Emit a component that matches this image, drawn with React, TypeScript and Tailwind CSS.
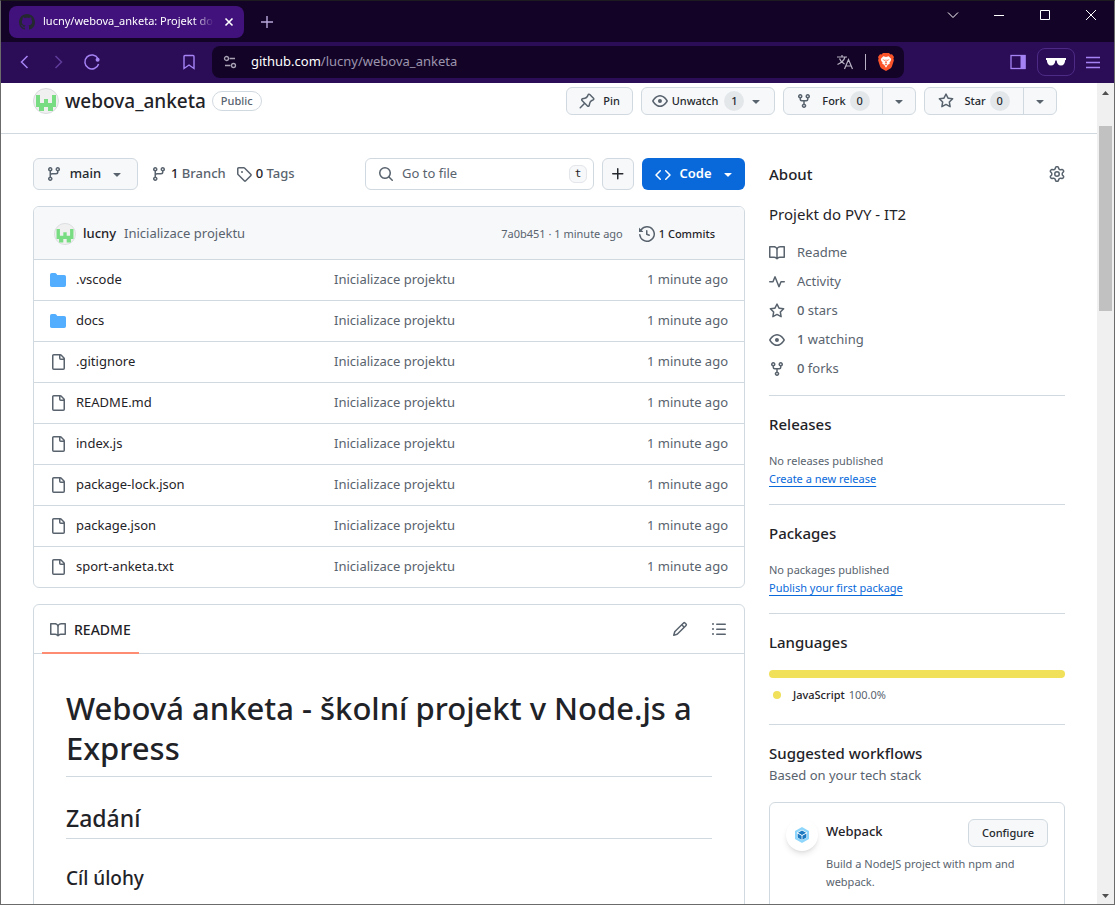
import type { ReactNode } from "react";

const ICONS = {
  pin: "m11.294.984 3.722 3.722a1.75 1.75 0 0 1-.504 2.826l-1.327.613a3.089 3.089 0 0 0-1.707 2.084l-.584 2.454c-.317 1.332-1.972 1.8-2.94.832L5.75 11.311 1.78 15.28a.749.749 0 1 1-1.06-1.06l3.969-3.97-2.204-2.204c-.968-.968-.5-2.623.832-2.94l2.454-.584a3.08 3.08 0 0 0 2.084-1.707l.613-1.327a1.75 1.75 0 0 1 2.826-.504ZM6.283 9.723l2.732 2.731a.25.25 0 0 0 .42-.119l.584-2.454a4.586 4.586 0 0 1 2.537-3.098l1.328-.613a.25.25 0 0 0 .072-.404l-3.722-3.722a.25.25 0 0 0-.404.072l-.613 1.328a4.584 4.584 0 0 1-3.098 2.537l-2.454.584a.25.25 0 0 0-.119.42l2.731 2.732Z",
  eye: "M8 2c1.981 0 3.671.992 4.933 2.078 1.27 1.091 2.187 2.345 2.637 3.023a1.62 1.62 0 0 1 0 1.798c-.45.678-1.367 1.932-2.637 3.023C11.67 13.008 9.981 14 8 14c-1.981 0-3.671-.992-4.933-2.078C1.797 10.83.88 9.576.43 8.898a1.62 1.62 0 0 1 0-1.798c.45-.677 1.367-1.931 2.637-3.022C4.33 2.992 6.019 2 8 2ZM1.679 7.932a.12.12 0 0 0 0 .136c.411.622 1.241 1.75 2.366 2.717C5.176 11.758 6.527 12.5 8 12.5c1.473 0 2.825-.742 3.955-1.715 1.124-.967 1.954-2.096 2.366-2.717a.12.12 0 0 0 0-.136c-.412-.621-1.242-1.75-2.366-2.717C10.824 4.242 9.473 3.5 8 3.5c-1.473 0-2.825.742-3.955 1.715-1.124.967-1.954 2.096-2.366 2.717ZM8 10a2 2 0 1 1-.001-3.999A2 2 0 0 1 8 10Z",
  fork: "M5 5.372v.878c0 .414.336.75.75.75h4.5a.75.75 0 0 0 .75-.75v-.878a2.25 2.25 0 1 1 1.5 0v.878a2.25 2.25 0 0 1-2.25 2.25h-1.5v2.128a2.251 2.251 0 1 1-1.5 0V8.5h-1.5A2.25 2.25 0 0 1 3.5 6.25v-.878a2.25 2.25 0 1 1 1.5 0ZM5 3.25a.75.75 0 1 0-1.5 0 .75.75 0 0 0 1.5 0Zm6.75.75a.75.75 0 1 0 0-1.5.75.75 0 0 0 0 1.5Zm-3 8.75a.75.75 0 1 0-1.5 0 .75.75 0 0 0 1.5 0Z",
  star: "M8 .25a.75.75 0 0 1 .673.418l1.882 3.815 4.21.612a.75.75 0 0 1 .416 1.279l-3.046 2.97.719 4.192a.751.751 0 0 1-1.088.791L8 12.347l-3.766 1.98a.75.75 0 0 1-1.088-.79l.72-4.194L.818 6.374a.75.75 0 0 1 .416-1.28l4.21-.611L7.327.668A.75.75 0 0 1 8 .25Zm0 2.445L6.615 5.5a.75.75 0 0 1-.564.41l-3.097.45 2.24 2.184a.75.75 0 0 1 .216.664l-.528 3.084 2.769-1.456a.75.75 0 0 1 .698 0l2.77 1.456-.53-3.084a.75.75 0 0 1 .216-.664l2.24-2.183-3.096-.45a.75.75 0 0 1-.564-.41L8 2.694Z",
  caret: "m4.427 7.427 3.396 3.396a.25.25 0 0 0 .354 0l3.396-3.396A.25.25 0 0 0 11.396 7H4.604a.25.25 0 0 0-.177.427Z",
  branch: "M9.5 3.25a2.25 2.25 0 1 1 3 2.122V6A2.5 2.5 0 0 1 10 8.5H6a1 1 0 0 0-1 1v1.128a2.251 2.251 0 1 1-1.5 0V5.372a2.25 2.25 0 1 1 1.5 0v1.836A2.493 2.493 0 0 1 6 7h4a1 1 0 0 0 1-1v-.628A2.25 2.25 0 0 1 9.5 3.25Zm-6 0a.75.75 0 1 0 1.5 0 .75.75 0 0 0-1.5 0Zm8.25-.75a.75.75 0 1 0 0 1.5.75.75 0 0 0 0-1.5ZM4.25 12a.75.75 0 1 0 0 1.5.75.75 0 0 0 0-1.5Z",
  tag: "M1 7.775V2.75C1 1.784 1.784 1 2.75 1h5.025c.464 0 .91.184 1.238.513l6.25 6.25a1.75 1.75 0 0 1 0 2.474l-5.026 5.026a1.75 1.75 0 0 1-2.474 0l-6.25-6.25A1.752 1.752 0 0 1 1 7.775Zm1.5 0c0 .066.026.13.073.177l6.25 6.25a.25.25 0 0 0 .354 0l5.025-5.025a.25.25 0 0 0 0-.354l-6.25-6.25a.25.25 0 0 0-.177-.073H2.75a.25.25 0 0 0-.25.25ZM6 5a1 1 0 1 1 0 2 1 1 0 0 1 0-2Z",
  search: "M10.68 11.74a6 6 0 0 1-7.922-8.982 6 6 0 0 1 8.982 7.922l3.04 3.04a.749.749 0 0 1-.326 1.275.749.749 0 0 1-.734-.215ZM11.5 7a4.499 4.499 0 1 0-8.997 0A4.499 4.499 0 0 0 11.5 7Z",
  plus: "M7.75 2a.75.75 0 0 1 .75.75V7h4.25a.75.75 0 0 1 0 1.5H8.5v4.25a.75.75 0 0 1-1.5 0V8.5H2.75a.75.75 0 0 1 0-1.5H7V2.75A.75.75 0 0 1 7.75 2Z",
  code: "m11.28 3.22 4.25 4.25a.75.75 0 0 1 0 1.06l-4.25 4.25a.749.749 0 0 1-1.275-.326.749.749 0 0 1 .215-.734L13.94 8l-3.72-3.72a.749.749 0 0 1 .326-1.275.749.749 0 0 1 .734.215Zm-6.56 0a.751.751 0 0 1 1.042.018.751.751 0 0 1 .018 1.042L2.06 8l3.72 3.72a.749.749 0 0 1-.326 1.275.749.749 0 0 1-.734-.215L.47 8.53a.75.75 0 0 1 0-1.06Z",
  history: "m.427 1.927 1.215 1.215a8.002 8.002 0 1 1-1.6 5.685.75.75 0 1 1 1.493-.154 6.5 6.5 0 1 0 1.18-4.458l1.358 1.358A.25.25 0 0 1 3.896 6H.25A.25.25 0 0 1 0 5.75V2.104a.25.25 0 0 1 .427-.177ZM7.75 4a.75.75 0 0 1 .75.75v2.992l2.028.812a.75.75 0 0 1-.557 1.392l-2.5-1A.751.751 0 0 1 7 8.25v-3.5A.75.75 0 0 1 7.75 4Z",
  file: "M2 1.75C2 .784 2.784 0 3.75 0h6.586c.464 0 .909.184 1.237.513l2.914 2.914c.329.328.513.773.513 1.237v9.586A1.75 1.75 0 0 1 13.25 16h-9.5A1.75 1.75 0 0 1 2 14.25Zm1.75-.25a.25.25 0 0 0-.25.25v12.5c0 .138.112.25.25.25h9.5a.25.25 0 0 0 .25-.25V6h-2.75A1.75 1.75 0 0 1 9 4.25V1.5Zm6.75.062V4.25c0 .138.112.25.25.25h2.688l-.011-.013-2.914-2.914-.013-.011Z",
  folder: "M1.75 1A1.75 1.75 0 0 0 0 2.75v10.5C0 14.216.784 15 1.75 15h12.5A1.75 1.75 0 0 0 16 13.25v-8.5A1.75 1.75 0 0 0 14.25 3H7.5a.25.25 0 0 1-.2-.1l-.9-1.2C6.07 1.26 5.55 1 5 1H1.75Z",
  book: "M0 1.75A.75.75 0 0 1 .75 1h4.253c1.227 0 2.317.59 3 1.501A3.743 3.743 0 0 1 11.006 1h4.245a.75.75 0 0 1 .75.75v10.5a.75.75 0 0 1-.75.75h-4.507a2.25 2.25 0 0 0-1.591.659l-.622.621a.75.75 0 0 1-1.06 0l-.622-.621A2.25 2.25 0 0 0 5.258 13H.75a.75.75 0 0 1-.75-.75Zm7.251 10.324.004-5.073-.002-2.253A2.25 2.25 0 0 0 5.003 2.5H1.5v9h3.757a3.75 3.75 0 0 1 1.994.574ZM8.755 4.75l-.004 7.322a3.752 3.752 0 0 1 1.992-.572H14.5v-9h-3.495a2.25 2.25 0 0 0-2.25 2.25Z",
  pencil: "M11.013 1.427a1.75 1.75 0 0 1 2.474 0l1.086 1.086a1.75 1.75 0 0 1 0 2.474l-8.61 8.61c-.21.21-.47.364-.756.445l-3.251.93a.75.75 0 0 1-.927-.928l.929-3.25c.081-.286.235-.547.445-.758l8.61-8.61Zm.176 4.823L9.75 4.81l-6.286 6.287a.253.253 0 0 0-.064.108l-.558 1.953 1.953-.558a.253.253 0 0 0 .108-.064Zm1.238-3.763a.25.25 0 0 0-.354 0L10.811 3.75l1.439 1.44 1.263-1.263a.25.25 0 0 0 0-.354Z",
  list: "M5.75 2.5h8.5a.75.75 0 0 1 0 1.5h-8.5a.75.75 0 0 1 0-1.5Zm0 5h8.5a.75.75 0 0 1 0 1.5h-8.5a.75.75 0 0 1 0-1.5Zm0 5h8.5a.75.75 0 0 1 0 1.5h-8.5a.75.75 0 0 1 0-1.5ZM2 14a1 1 0 1 1 0-2 1 1 0 0 1 0 2Zm1-6a1 1 0 1 1-2 0 1 1 0 0 1 2 0ZM2 4a1 1 0 1 1 0-2 1 1 0 0 1 0 2Z",
  gear: "M8 0a8.2 8.2 0 0 1 .701.031C9.444.095 9.99.645 10.16 1.29l.288 1.107c.018.066.079.158.212.224.231.114.454.243.668.386.123.082.233.09.299.071l1.103-.303c.644-.176 1.392.021 1.82.63.27.385.506.792.704 1.218.315.675.111 1.422-.364 1.891l-.814.806c-.049.048-.098.147-.088.294.016.257.016.515 0 .772-.01.147.038.246.088.294l.814.806c.475.469.679 1.216.364 1.891a7.977 7.977 0 0 1-.704 1.217c-.428.61-1.176.807-1.82.63l-1.102-.302c-.067-.019-.177-.011-.3.071a5.909 5.909 0 0 1-.668.386c-.133.066-.194.158-.211.224l-.29 1.106c-.168.646-.715 1.196-1.458 1.26a8.006 8.006 0 0 1-1.402 0c-.743-.064-1.289-.614-1.458-1.26l-.289-1.106c-.018-.066-.079-.158-.212-.224a5.738 5.738 0 0 1-.668-.386c-.123-.082-.233-.09-.299-.071l-1.103.303c-.644.176-1.392-.021-1.82-.63a8.12 8.12 0 0 1-.704-1.218c-.315-.675-.111-1.422.363-1.891l.815-.806c.05-.048.098-.147.088-.294a6.214 6.214 0 0 1 0-.772c.01-.147-.038-.246-.088-.294l-.815-.806C.635 6.045.431 5.298.746 4.623a7.92 7.92 0 0 1 .704-1.217c.428-.61 1.176-.807 1.82-.63l1.102.302c.067.019.177.011.3-.071.214-.143.437-.272.668-.386.133-.066.194-.158.211-.224l.29-1.106C6.009.645 6.556.095 7.299.03 7.53.01 7.764 0 8 0Zm-.571 1.525c-.036.003-.108.036-.137.146l-.289 1.105c-.147.561-.549.967-.998 1.189-.173.086-.34.183-.5.29-.417.278-.97.423-1.529.27l-1.103-.303c-.109-.03-.175.016-.195.045-.22.312-.412.644-.573.99-.014.031-.021.11.059.19l.815.806c.411.406.562.957.53 1.456a4.709 4.709 0 0 0 0 .582c.032.499-.119 1.05-.53 1.456l-.815.806c-.081.08-.073.159-.059.19.162.346.353.677.573.989.02.03.085.076.195.046l1.102-.303c.56-.153 1.113-.008 1.53.27.161.107.328.204.501.29.447.222.85.629.997 1.189l.289 1.105c.029.109.101.143.137.146a6.6 6.6 0 0 0 1.142 0c.036-.003.108-.036.137-.146l.289-1.105c.147-.561.549-.967.998-1.189.173-.086.34-.183.5-.29.417-.278.97-.423 1.529-.27l1.103.303c.109.029.175-.016.195-.045.22-.313.411-.644.573-.99.014-.031.021-.11-.059-.19l-.815-.806c-.411-.406-.562-.957-.53-1.456a4.709 4.709 0 0 0 0-.582c-.032-.499.119-1.05.53-1.456l.815-.806c.081-.08.073-.159.059-.19a6.464 6.464 0 0 0-.573-.989c-.02-.03-.085-.076-.195-.046l-1.102.303c-.56.153-1.113.008-1.53-.27a4.44 4.44 0 0 0-.501-.29c-.447-.222-.85-.629-.997-1.189l-.289-1.105c-.029-.11-.101-.143-.137-.146a6.6 6.6 0 0 0-1.142 0ZM11 8a3 3 0 1 1-6 0 3 3 0 0 1 6 0ZM9.5 8a1.5 1.5 0 1 0-3.001.001A1.5 1.5 0 0 0 9.5 8Z",
  pulse: "M6 2c.306 0 .582.187.696.471L10 10.731l1.304-3.26A.751.751 0 0 1 12 7h3.25a.75.75 0 0 1 0 1.5h-2.742l-1.812 4.528a.751.751 0 0 1-1.392 0L6 4.77 4.696 8.03A.75.75 0 0 1 4 8.5H.75a.75.75 0 0 1 0-1.5h2.742l1.812-4.529A.751.751 0 0 1 6 2Z",
  github: "M8 0c4.42 0 8 3.58 8 8a8.013 8.013 0 0 1-5.45 7.59c-.4.08-.55-.17-.55-.38 0-.27.01-1.13.01-2.2 0-.75-.25-1.23-.54-1.48 1.78-.2 3.65-.88 3.65-3.95 0-.88-.31-1.59-.82-2.15.08-.2.36-1.02-.08-2.12 0 0-.67-.22-2.2.82-.64-.18-1.32-.27-2-.27-.68 0-1.36.09-2 .27-1.53-1.03-2.2-.82-2.2-.82-.44 1.1-.16 1.92-.08 2.12-.51.56-.82 1.28-.82 2.15 0 3.06 1.86 3.75 3.64 3.95-.23.2-.44.55-.51 1.07-.46.21-1.61.55-2.33-.66-.15-.24-.6-.83-1.23-.82-.67.01-.27.38.01.53.34.19.73.9.82 1.13.16.45.68 1.31 2.69.94 0 .67.01 1.3.01 1.49 0 .21-.15.45-.55.38A7.995 7.995 0 0 1 0 8c0-4.42 3.58-8 8-8Z",
};

type IconName = keyof typeof ICONS;

function Icon({ name, className = "text-[#59636e]" }: { name: IconName; className?: string }) {
  return (
    <svg viewBox="0 0 16 16" width="16" height="16" fill="currentColor" aria-hidden="true" className={`shrink-0 ${className}`}>
      <path d={ICONS[name]} />
    </svg>
  );
}

function Line({ d, size = 16, width = 1, className = "" }: { d: string; size?: number; width?: number; className?: string }) {
  return (
    <svg viewBox={`0 0 ${size} ${size}`} width={size} height={size} fill="none" stroke="currentColor" strokeWidth={width} aria-hidden="true" className={`shrink-0 ${className}`}>
      <path d={d} />
    </svg>
  );
}

function Identicon({ size }: { size: number }) {
  return (
    <svg viewBox="0 0 26 26" width={size} height={size} aria-hidden="true" className="shrink-0">
      <circle cx="13" cy="13" r="12.5" fill="#f0f0f0" stroke="#d8dadd" />
      <path fill="#78dd82" d="M3 7h4v8h4v-4h4v4h4V7h4v12h-3v4h-5v-4h-4v4H6v-4H3z" />
    </svg>
  );
}

function TitleBar() {
  return (
    <header className="flex h-[41px] shrink-0 items-center bg-[#130427] pl-2 text-white">
      <div className="flex h-8 w-[235px] items-center rounded-lg bg-[#41127c] pr-2 pl-2.5">
        <Icon name="github" className="text-[#24292f]" />
        <span className="ml-2 flex-1 overflow-hidden text-[11px] whitespace-nowrap [mask-image:linear-gradient(to_right,black_88%,transparent)]">
          lucny/webova_anketa: Projekt do
        </span>
        <button aria-label="Close tab" className="ml-2 p-0.5">
          <Line size={10} width={1.6} d="M1.5 1.5l7 7M8.5 1.5l-7 7" />
        </button>
      </div>
      <button aria-label="New tab" className="ml-4 text-[#b9a8dc]">
        <Line size={14} width={1.4} d="M7 1v12M1 7h12" />
      </button>
      <div className="mb-3.5 ml-auto flex items-center">
        <button aria-label="Search tabs" className="grid w-[46px] place-items-center">
          <Line size={12} d="M1 3.5l5 5 5-5" />
        </button>
        <button aria-label="Minimize" className="grid w-[46px] place-items-center">
          <Line size={12} d="M1 6.5h10" />
        </button>
        <button aria-label="Maximize" className="grid w-[46px] place-items-center">
          <Line size={12} d="M1.5 1.5h9v9h-9z" />
        </button>
        <button aria-label="Close" className="grid w-[46px] place-items-center">
          <Line size={12} d="M1 1l10 10M11 1L1 11" />
        </button>
      </div>
    </header>
  );
}

function BraveLogo() {
  return (
    <svg viewBox="0 0 16 18" width="16" height="18" aria-hidden="true">
      <path fill="#fb542b" d="M5 0h6l1.5 1.5 1.5-.2L16 4l-.6 1.5.5 1.800-2 6.200c-.3.900-.7 1.300-1.500 1.900L8 18l-4.400-2.600c-.8-.6-1.200-1-1.500-1.900l-2-6.200.5-1.800L0 4l2-2.700 1.500.2z" />
      <path fill="#fff" d="M5.300 3.300 8 3.900l2.700-.6 2.500 2.800-.5 1.800-1.200 1.500.2 1.300-1.900 1L8 14.800l-1.800-3.100-1.900-1 .2-1.300-1.200-1.500-.5-1.800z" />
      <path fill="#fb542b" d="m4.300 6.300 2.700.7-.5 1zM11.700 6.300 9 7l.5 1zM7.600 6.500h.8L8.500 9.300l.8.700L8 10.600 6.700 10l.8-.7zM6.600 11.600 8 11l1.400.6L8 12.400z" />
    </svg>
  );
}

function Toolbar() {
  return (
    <nav className="flex h-[41px] shrink-0 items-center bg-[#2b0d57] pr-3.5 pb-px pl-4 text-[#a583f5]">
      <button aria-label="Back">
        <Line width={1.5} d="M10.5 2 4.500 8l6 6" />
      </button>
      <button aria-label="Forward" className="ml-[18px] text-[#5f3b9b]">
        <Line width={1.5} d="M4.500 2l6 6-6 6" />
      </button>
      <button aria-label="Reload" className="ml-4">
        <svg viewBox="0 0 18 18" width="18" height="18" fill="none" stroke="currentColor" strokeWidth="1.5" aria-hidden="true">
          <path d="M15 5.500A7 7 0 1 0 15.600 11" />
          <circle cx="14.600" cy="6.800" r="2" fill="currentColor" stroke="none" />
        </svg>
      </button>
      <button aria-label="Bookmark this page" className="ml-20">
        <Line width={1.4} d="M3 2.500a1 1 0 0 1 1-1h8a1 1 0 0 1 1 1v12L8 11l-5 3.500z" />
      </button>
      <div className="ml-[15px] flex h-8 flex-1 items-center rounded-lg bg-[#130427] pr-2.5 pl-2.5">
        <svg viewBox="0 0 16 16" width="16" height="16" fill="none" stroke="#a8a2b4" strokeWidth="1.3" aria-hidden="true">
          <circle cx="4.500" cy="4.500" r="2" />
          <circle cx="11.500" cy="11.500" r="2" />
          <path d="M7.500 4.500h5.500M3 11.500h5.500" />
        </svg>
        <p className="ml-[13px] text-[13px] text-[#9d95ae]">
          <span className="text-white">github.com</span>/lucny/webova_anketa
        </p>
        <button aria-label="Translate" className="ml-auto text-[#b8b2c4]">
          <Line width={1.2} d="M0 3h10M5 1v2M8 3C7 6.500 4 9 .5 10.500M2.500 4.500C3.500 7.500 5.500 9 7.500 10M7.500 15l4-9.500 4 9.500M9 12h5" />
        </button>
        <span className="mx-3 h-4 w-px bg-[#b8b2c4]" />
        <button aria-label="Brave Shields">
          <BraveLogo />
        </button>
      </div>
      <button aria-label="Toggle sidebar" className="ml-[106px]">
        <svg viewBox="0 0 16 16" width="16" height="16" aria-hidden="true">
          <rect x="1" y="1.500" width="14" height="13" fill="none" stroke="currentColor" strokeWidth="1.300" />
          <path d="M10.500 1h5v14h-5z" fill="currentColor" />
        </svg>
      </button>
      <button aria-label="Private profile" className="ml-[11px] grid h-7 w-[38px] place-items-center rounded-lg border border-[#4c2a85] text-white">
        <svg viewBox="0 0 22 10" width="22" height="10" fill="currentColor" aria-hidden="true">
          <path d="M1 1h20v2h-.8c-.2 3.500-1.500 5.500-4.200 5.500-2.600 0-4-1.800-4.300-5h-1.400C10 6.700 8.600 8.500 6 8.500 3.300 8.500 2 6.500 1.800 3H1z" />
        </svg>
      </button>
      <button aria-label="Menu" className="ml-[11px]">
        <Line size={14} d="M0 2.500h14M0 7.500h14M0 12.500h14" width={1.4} />
      </button>
    </nav>
  );
}

const BUTTON = "border border-[#d1d9e0] bg-[#f6f8fa] text-[#25292e]";

function Counter({ children }: { children: ReactNode }) {
  return <span className="grid size-5 place-items-center rounded-full bg-[#e4e7ea]">{children}</span>;
}

function SplitButton({ icon, label, count }: { icon: IconName; label: string; count: number }) {
  return (
    <div className={`flex h-7 overflow-hidden rounded-md ${BUTTON}`}>
      <button className="flex w-[98px] items-center justify-center">
        <Icon name={icon} />
        <span className="ml-2.5 mr-1">{label}</span>
        <Counter>{count}</Counter>
      </button>
      <button aria-label={`${label} options`} className="grid w-[33px] place-items-center border-l border-[#d1d9e0]">
        <Icon name="caret" />
      </button>
    </div>
  );
}

function RepoHeader() {
  return (
    <div className="flex items-center border-b border-[#d1d9e0] pt-1 pr-10 pb-[18px] pl-8">
      <Identicon size={26} />
      <h1 className="ml-1.5 text-[19px] leading-7 font-medium">webova_anketa</h1>
      <span className="ml-1.5 rounded-full border border-[#d1d9e0] px-2 text-[11px] leading-[18px] font-medium text-[#59636e]">Public</span>
      <div className="ml-auto flex gap-2 text-[11px] font-medium">
        <button className={`flex h-7 w-[67px] items-center justify-center gap-2 rounded-md ${BUTTON}`}>
          <Icon name="pin" />
          Pin
        </button>
        <button className={`flex h-7 w-[134px] items-center justify-center gap-1 rounded-md ${BUTTON}`}>
          <Icon name="eye" />
          <span className="mr-0.5">Unwatch</span>
          <Counter>1</Counter>
          <Icon name="caret" />
        </button>
        <SplitButton icon="fork" label="Fork" count={0} />
        <SplitButton icon="star" label="Star" count={0} />
      </div>
    </div>
  );
}

function ActionBar() {
  return (
    <div className="flex h-8 items-center text-[13px] font-medium">
      <button className={`flex h-8 w-[105px] items-center justify-center gap-2 rounded-md ${BUTTON}`}>
        <Icon name="branch" />
        main
        <Icon name="caret" />
      </button>
      <a href="#branches" className="ml-[13px] flex items-center gap-1 text-[#59636e]">
        <Icon name="branch" />
        <span>
          <b className="font-medium text-[#1f2328]">1</b> Branch
        </span>
      </a>
      <a href="#tags" className="ml-2.5 flex items-center gap-1 text-[#59636e]">
        <Icon name="tag" />
        <span>
          <b className="font-medium text-[#1f2328]">0</b> Tags
        </span>
      </a>
      <label className="ml-auto flex h-8 w-[229px] items-center rounded-md border border-[#d1d9e0] pr-1.5 pl-3 font-normal">
        <Icon name="search" />
        <input aria-label="Go to file" placeholder="Go to file" className="ml-2 w-full min-w-0 outline-none placeholder:text-[#59636e]" />
        <kbd className="grid h-[18px] w-[18px] shrink-0 place-items-center rounded-md border border-[#e3e6ea] bg-[#f6f8fa] font-[DejaVu_Sans_Mono,monospace] text-[11px]">t</kbd>
      </label>
      <button aria-label="Add file" className={`ml-2 grid size-8 place-items-center rounded-md ${BUTTON}`}>
        <Icon name="plus" className="text-[#25292e]" />
      </button>
      <button className="ml-2 flex h-8 w-[103px] items-center justify-center gap-2 rounded-md bg-[#0969da] pl-1 font-semibold text-white">
        <Icon name="code" className="mt-0.5 text-white" />
        Code
        <Icon name="caret" className="text-white" />
      </button>
    </div>
  );
}

const FILES: { name: string; folder?: boolean }[] = [
  { name: ".vscode", folder: true },
  { name: "docs", folder: true },
  { name: ".gitignore" },
  { name: "README.md" },
  { name: "index.js" },
  { name: "package-lock.json" },
  { name: "package.json" },
  { name: "sport-anketa.txt" },
];

const CELL = "h-[41px] border-t border-[#d1d9e0]";

function FileList() {
  return (
    <section className="mt-4 overflow-hidden rounded-md border border-[#d1d9e0] text-[13px]">
      <div className="flex h-[52px] items-center bg-[#f6f8fa] pt-0.5 pr-[29px] pl-5">
        <Identicon size={22} />
        <a href="#lucny" className="ml-[7px] font-medium">lucny</a>
        <a href="#commit" className="ml-2 text-[#59636e]">Inicializace projektu</a>
        <span className="ml-auto text-[11px] text-[#59636e]">7a0b451 · 1 minute ago</span>
        <a href="#commits" className="ml-4 flex items-center gap-1 text-[11px] font-medium">
          <Icon name="history" />
          1 Commits
        </a>
      </div>
      <table className="w-full table-fixed border-separate border-spacing-0">
        <tbody>
          {FILES.map((file) => (
            <tr key={file.name}>
              <td className={`w-[300px] pl-4 ${CELL}`}>
                <a href={`#${file.name}`} className="flex items-center gap-2.5">
                  <Icon name={file.folder ? "folder" : "file"} className={file.folder ? "text-[#54aeff]" : "text-[#59636e]"} />
                  {file.name}
                </a>
              </td>
              <td className={`text-[#59636e] ${CELL}`}>Inicializace projektu</td>
              <td className={`w-[136px] pr-4 text-right text-[#59636e] ${CELL}`}>1 minute ago</td>
            </tr>
          ))}
        </tbody>
      </table>
    </section>
  );
}

function Readme() {
  return (
    <section className="mt-4 rounded-md border border-[#d1d9e0]">
      <div className="flex h-[49px] items-center border-b border-[#d1d9e0] pr-[17px] pl-2">
        <a href="#readme" className="-mb-px flex h-[49px] items-center gap-2 border-b-2 border-[#fd8c73] px-2 pt-0.5 text-sm font-medium">
          <Icon name="book" />
          README
        </a>
        <button aria-label="Edit file" className="ml-auto">
          <Icon name="pencil" />
        </button>
        <button aria-label="Outline" className="ml-[23px]">
          <Icon name="list" />
        </button>
      </div>
      <article className="px-8 pt-[34px] pb-8 font-medium">
        <h1 className="border-b border-[#d1d9e0] pb-2 text-[31px] leading-10">Webová anketa - školní projekt v Node.js a Express</h1>
        <h2 className="mt-[26px] border-b border-[#d1d9e0] pb-[5px] text-[23px] leading-[30px]">Zadání</h2>
        <h3 className="mt-[26px] text-[19px] leading-[26px]">Cíl úlohy</h3>
      </article>
    </section>
  );
}

const META: { icon: IconName; count?: string; label: string }[] = [
  { icon: "book", label: "Readme" },
  { icon: "pulse", label: "Activity" },
  { icon: "star", count: "0", label: "stars" },
  { icon: "eye", count: "1", label: "watching" },
  { icon: "fork", count: "0", label: "forks" },
];

const SECTION = "border-b border-[#d1d9e0] pt-4 pb-4";
const HEADING = "text-[15px] leading-6 font-medium";

function EmptySection({ title, note, action }: { title: string; note: string; action: string }) {
  return (
    <section className={SECTION}>
      <h2 className={HEADING}>{title}</h2>
      <p className="mt-4 text-[11px] leading-[18px] text-[#59636e]">{note}</p>
      <p className="text-[11px] leading-[18px]">
        <a href="#new" className="text-[#0969da] underline underline-offset-3">{action}</a>
      </p>
    </section>
  );
}

function WebpackLogo() {
  return (
    <svg viewBox="0 0 16 16" width="16" height="16" aria-hidden="true">
      <path fill="#8ed6fb" d="m8 0 7 4v8l-7 4-7-4V4z" />
      <path fill="#fff" d="m8 2.800 5 2.700v5l-5 2.800-5-2.800v-5z" />
      <path fill="#1c78c0" d="m8 3.600 4 2.200-4 2.300-4-2.300zM3.600 6.500l4 2.300v4l-4-2.200zM12.400 6.500l-4 2.300v4l4-2.200z" />
    </svg>
  );
}

function Sidebar() {
  return (
    <aside className="w-[296px] shrink-0">
      <section className="border-b border-[#d1d9e0] pt-1 pb-4">
        <div className="flex items-center justify-between">
          <h2 className={HEADING}>About</h2>
          <button aria-label="Edit repository details">
            <Icon name="gear" />
          </button>
        </div>
        <p className="mt-4 text-[15px] leading-6">Projekt do PVY - IT2</p>
        <ul className="mt-4 flex flex-col gap-2 text-[13px] leading-[21px] text-[#59636e]">
          {META.map((item) => (
            <li key={item.label}>
              <a href={`#${item.label}`} className="flex items-center gap-3">
                <Icon name={item.icon} />
                <span>
                  {item.count && <strong className="font-medium">{item.count} </strong>}
                  {item.label}
                </span>
              </a>
            </li>
          ))}
        </ul>
      </section>
      <EmptySection title="Releases" note="No releases published" action="Create a new release" />
      <EmptySection title="Packages" note="No packages published" action="Publish your first package" />
      <section className="border-b border-[#d1d9e0] pt-4 pb-5">
        <h2 className={HEADING}>Languages</h2>
        <div className="mt-4 h-2 rounded-full bg-[#f1e05a]" />
        <p className="mt-2 flex items-center text-[11px] leading-[18px] text-[#59636e]">
          <span className="mr-3 ml-1 size-2 rounded-full bg-[#f1e05a]" />
          <span className="mr-1 font-medium text-[#1f2328]">JavaScript</span>
          100.0%
        </p>
      </section>
      <section className="pt-4">
        <h2 className={HEADING}>Suggested workflows</h2>
        <p className="text-[13px] leading-[21px] text-[#59636e]">Based on your tech stack</p>
        <div className="mt-4 flex gap-2 rounded-md border border-[#d1d9e0] p-4">
          <span className="grid size-8 shrink-0 place-items-center rounded-full bg-white shadow-md shadow-black/10">
            <WebpackLogo />
          </span>
          <div className="flex-1">
            <div className="flex items-start justify-between">
              <h3 className="text-[13px] leading-6 font-medium">Webpack</h3>
              <button className={`h-7 w-20 rounded-md text-[11px] font-medium ${BUTTON}`}>Configure</button>
            </div>
            <p className="mt-2 pb-8 text-[11px] leading-[18px] text-[#59636e]">Build a NodeJS project with npm and webpack.</p>
          </div>
        </div>
      </section>
    </aside>
  );
}

function Scrollbar() {
  return (
    <div aria-hidden="true" className="flex w-[17px] shrink-0 flex-col items-center bg-[#f0f0f0] py-1.5 text-[#505050]">
      <svg viewBox="0 0 7 4" width="7" height="4" className="mt-0.5" fill="currentColor">
        <path d="M0 4 3.500 0 7 4z" />
      </svg>
      <span className="mt-[31px] h-[185px] w-[13px] bg-[#c1c1c1]" />
      <svg viewBox="0 0 7 4" width="7" height="4" className="mt-auto" fill="currentColor">
        <path d="M0 0 3.500 4 7 0z" />
      </svg>
    </div>
  );
}

export default function App() {
  return (
    <div className="flex h-screen flex-col overflow-hidden border border-[#6b6b6b] border-t-[#1d1b20] bg-white font-[Noto_Sans,sans-serif] text-[#1f2328]">
      <TitleBar />
      <Toolbar />
      <div className="flex min-h-0 flex-1">
        <div className="min-w-0 flex-1 overflow-hidden">
          <RepoHeader />
          <div className="flex gap-6 px-8 pt-6">
            <main className="min-w-0 flex-1">
              <ActionBar />
              <FileList />
              <Readme />
            </main>
            <Sidebar />
          </div>
        </div>
        <Scrollbar />
      </div>
    </div>
  );
}
